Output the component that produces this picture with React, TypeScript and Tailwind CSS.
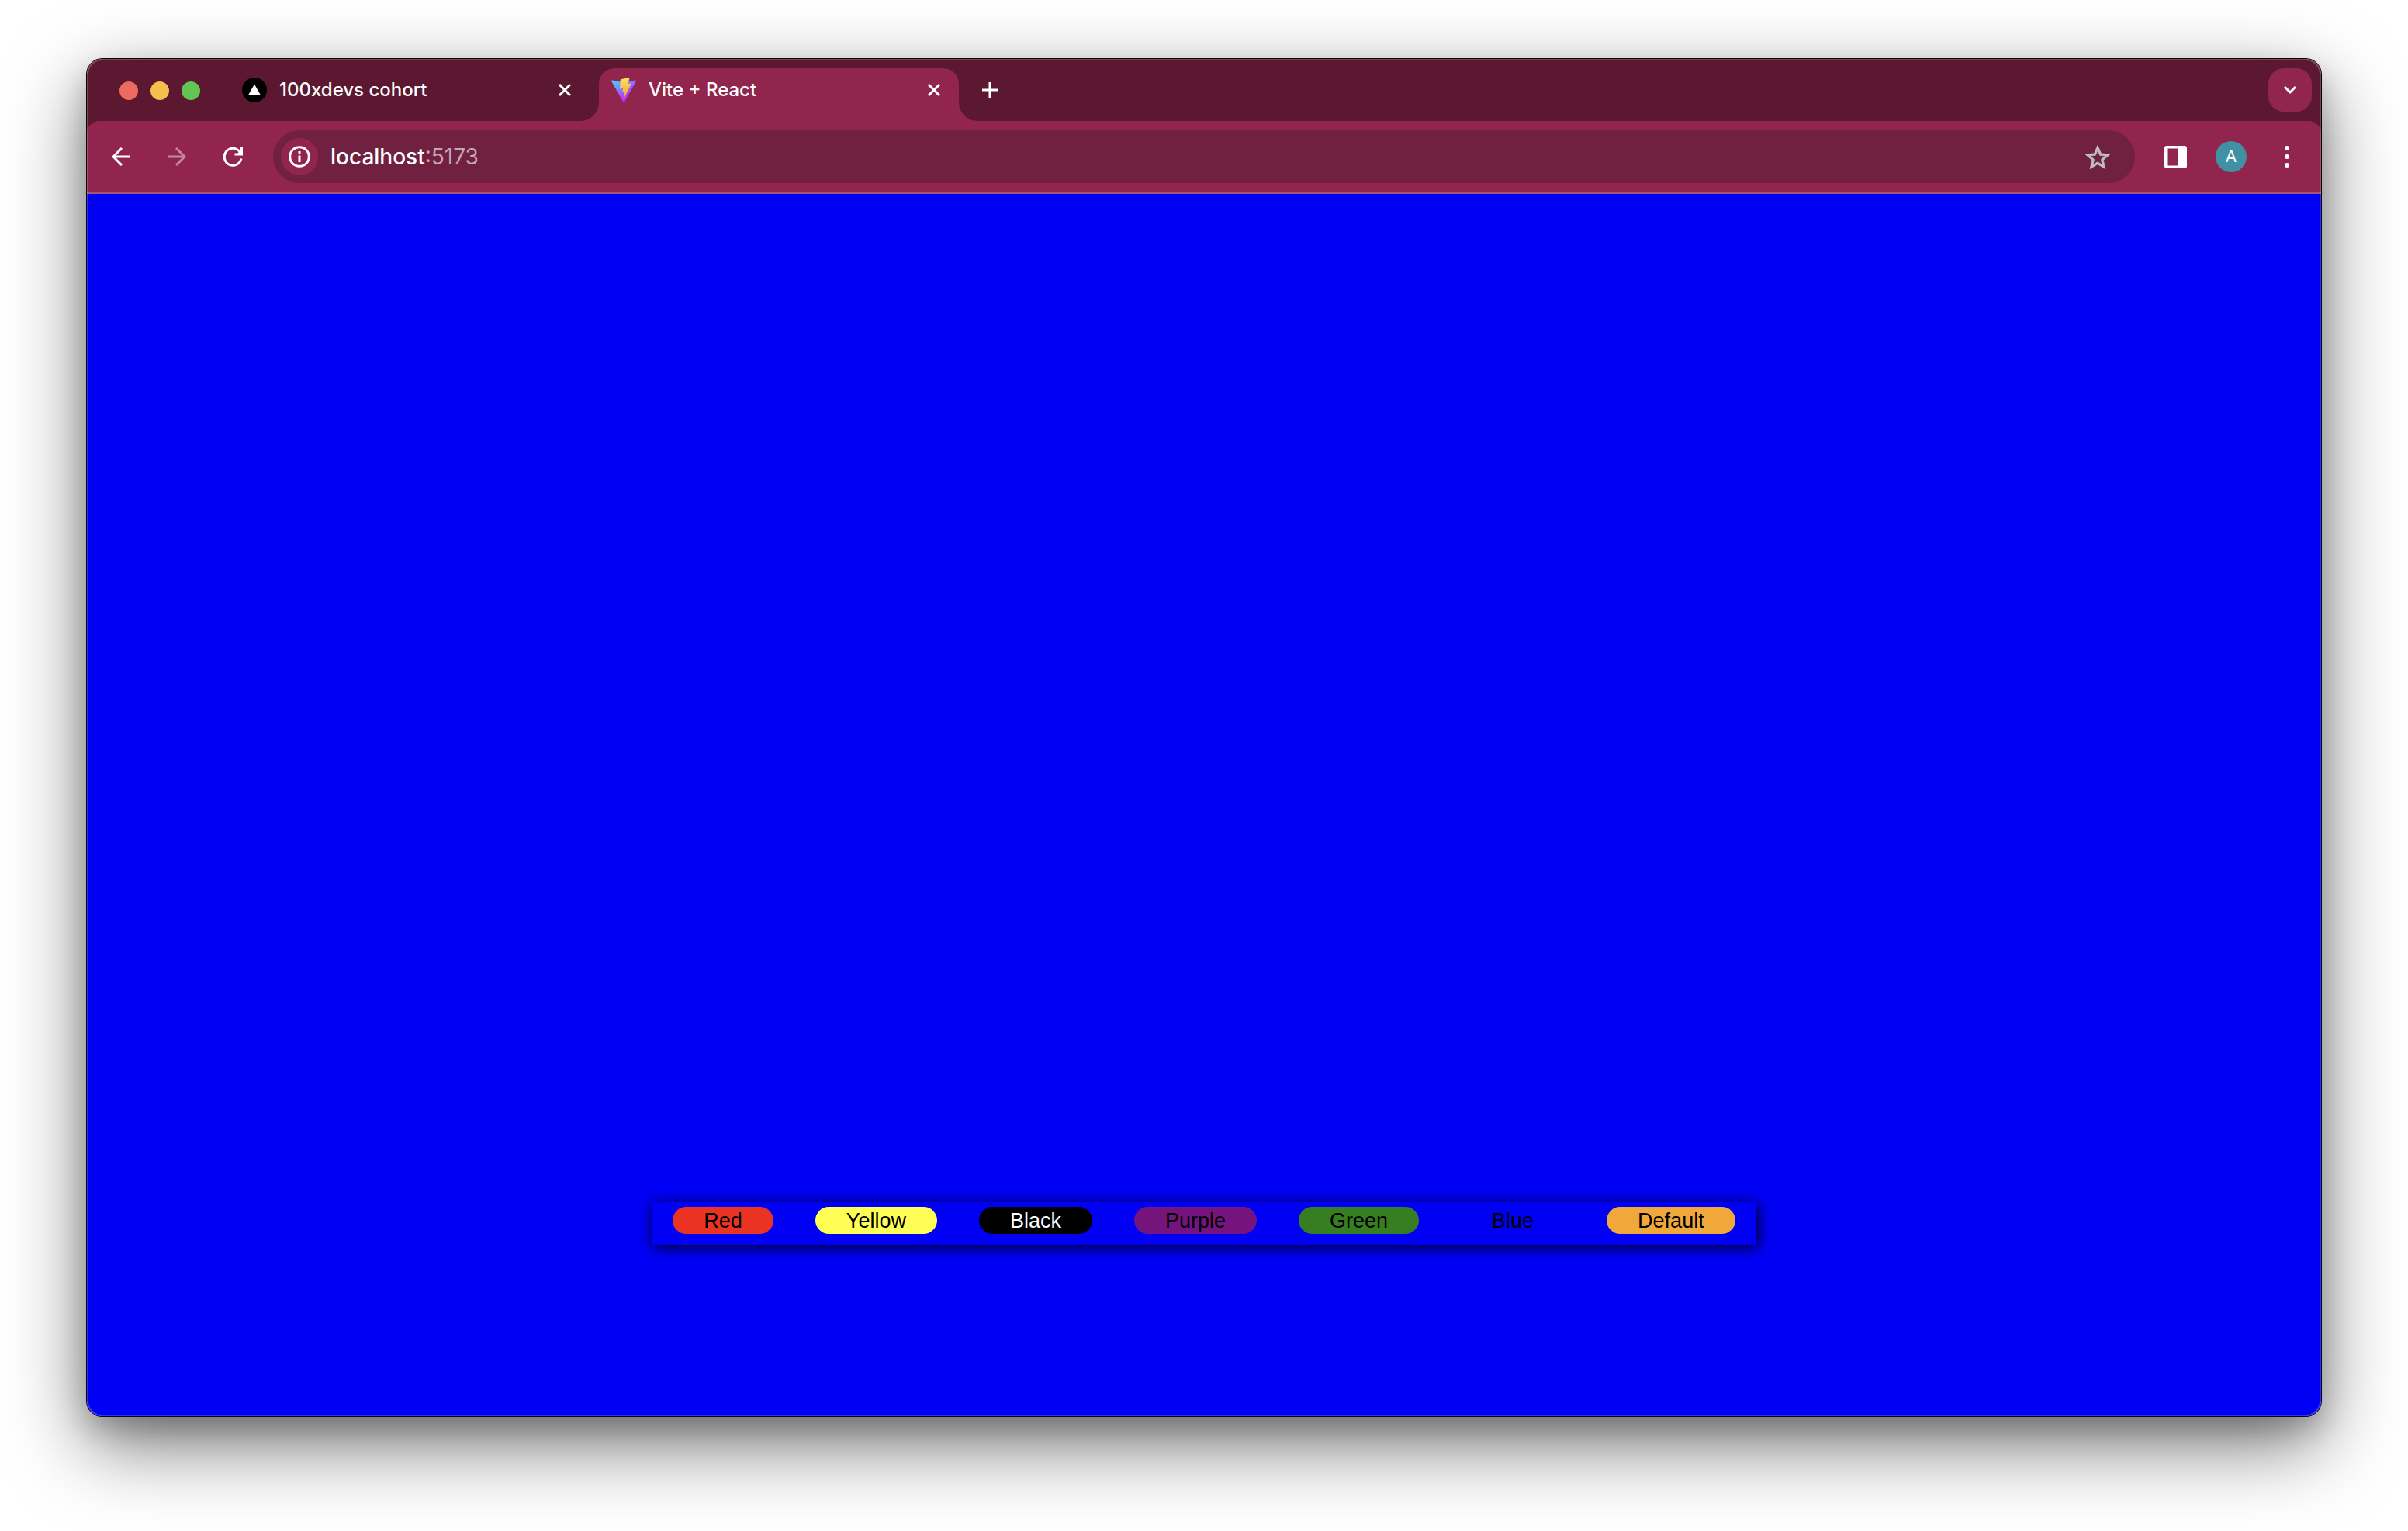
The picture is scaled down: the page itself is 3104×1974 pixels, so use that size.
import React from "react";

function CloseIcon() {
  return (
    <svg width="18" height="18" viewBox="0 0 18 18" fill="none" stroke="#fff" strokeWidth="3">
      <path d="M2 2L16 16M16 2L2 16" />
    </svg>
  );
}

function VercelIcon() {
  return (
    <svg width="32" height="32" viewBox="0 0 32 32" className="shrink-0">
      <circle cx="16" cy="16" r="16" fill="#000" />
      <path d="M16 8.5L23.6 22H8.4Z" fill="#fff" />
    </svg>
  );
}

function ViteIcon() {
  return (
    <svg width="32" height="32" viewBox="0 0 256 257" className="shrink-0">
      <defs>
        <linearGradient id="vite-v" x1="-.828%" x2="57.636%" y1="7.652%" y2="78.411%">
          <stop offset="0%" stopColor="#41D1FF" />
          <stop offset="100%" stopColor="#BD34FE" />
        </linearGradient>
        <linearGradient id="vite-bolt" x1="43.376%" x2="50.316%" y1="2.242%" y2="89.03%">
          <stop offset="0%" stopColor="#FBE35C" />
          <stop offset="100%" stopColor="#F2A93B" />
        </linearGradient>
      </defs>
      <path
        fill="url(#vite-v)"
        d="M255.153 37.938L134.897 252.976c-2.483 4.44-8.862 4.466-11.382.048L.875 37.958c-2.746-4.814 1.371-10.646 6.827-9.67l120.385 21.517a6.537 6.537 0 0 0 2.322-.004l117.867-21.483c5.438-.991 9.574 4.796 6.877 9.62Z"
      />
      <path
        fill="url(#vite-bolt)"
        d="M185.432.063L96.44 17.501a3.268 3.268 0 0 0-2.634 3.014l-5.474 92.456a3.268 3.268 0 0 0 3.997 3.378l24.777-5.718c2.318-.535 4.413 1.507 3.936 3.838l-7.361 36.047c-.495 2.426 1.782 4.5 4.151 3.78l15.304-4.649c2.372-.72 4.652 1.36 4.15 3.788l-11.698 56.621c-.732 3.542 3.979 5.473 5.943 2.437l1.313-2.028l72.516-144.72c1.215-2.423-.88-5.186-3.54-4.672l-25.505 4.922c-2.396.462-4.435-1.77-3.759-4.114l16.646-57.705c.677-2.35-1.37-4.583-3.769-4.113Z"
      />
    </svg>
  );
}

function TabStrip() {
  return (
    <div className="flex h-20 bg-[#5c1831] pr-3 pl-[42px]">
      <div className="flex w-[158px] items-center gap-4 pt-0.5">
        <button aria-label="Close window" className="size-6 rounded-full bg-[#ed6a5e]" />
        <button aria-label="Minimize window" className="size-6 rounded-full bg-[#f5bf4f]" />
        <button aria-label="Zoom window" className="size-6 rounded-full bg-[#61c554]" />
      </div>
      <div className="flex w-[460px] items-center gap-4 pr-[35px]">
        <VercelIcon />
        <span className="grow font-medium">100xdevs cohort</span>
        <button aria-label="Close tab 100xdevs cohort">
          <CloseIcon />
        </button>
      </div>
      <div className="relative mt-3 flex w-[464px] items-center gap-4 rounded-t-[20px] bg-[#92254d] pr-[23px] pb-3 pl-4">
        <svg className="absolute bottom-0 -left-6" width="24" height="24" viewBox="0 0 24 24">
          <path d="M24 0A24 24 0 0 1 0 24H24Z" fill="#92254d" />
        </svg>
        <svg className="absolute -right-6 bottom-0" width="24" height="24" viewBox="0 0 24 24">
          <path d="M0 0A24 24 0 0 0 24 24H0Z" fill="#92254d" />
        </svg>
        <ViteIcon />
        <span className="grow font-medium">Vite + React</span>
        <button aria-label="Close tab Vite + React">
          <CloseIcon />
        </button>
      </div>
      <button aria-label="New tab" className="ml-[30px]">
        <svg width="20" height="20" viewBox="0 0 20 20" stroke="#fff" strokeWidth="3">
          <path d="M10 0V20M0 10H20" />
        </svg>
      </button>
      <button
        aria-label="Search tabs"
        className="mt-3 ml-auto flex size-14 items-center justify-center rounded-[20px] bg-[#92254d]"
      >
        <svg width="18" height="12" viewBox="0 0 18 12" fill="none" stroke="#fff" strokeWidth="3">
          <path d="M2 2L9 9L16 2" />
        </svg>
      </button>
    </div>
  );
}

function Toolbar() {
  return (
    <div className="bg-[#5c1831]">
      <div className="flex h-[94px] items-center rounded-t-2xl border-b-2 border-[#a9507a] bg-[#92254d] pr-[41px] pl-8">
        <button aria-label="Back">
          <svg width="24" height="24" viewBox="0 0 24 24" fill="none" stroke="#fff" strokeWidth="3">
            <path d="M24 12H2M13 1L2 12L13 23" />
          </svg>
        </button>
        <button aria-label="Forward" className="ml-12 opacity-45">
          <svg width="24" height="24" viewBox="0 0 24 24" fill="none" stroke="#fff" strokeWidth="3">
            <path d="M0 12H22M11 1L22 12L11 23" />
          </svg>
        </button>
        <button aria-label="Reload" className="ml-12">
          <svg width="25" height="25" viewBox="0 0 25 25" fill="none" stroke="#fff" strokeWidth="3">
            <path d="M23 14.5A11 11 0 1 1 20.5 5L23 8" />
            <path d="M23.5 0V9H14.5" />
            <path d="M23 3V8H18Z" fill="#fff" stroke="none" />
          </svg>
        </button>
        <div className="mr-[38px] ml-[39px] flex h-[68px] grow items-center rounded-full bg-[#712140] pr-8 pl-2.5">
          <button
            aria-label="View site information"
            className="flex size-12 items-center justify-center rounded-full bg-[#92254d]"
          >
            <svg width="28" height="28" viewBox="0 0 28 28" fill="none" stroke="#fff" strokeWidth="3">
              <circle cx="14" cy="14" r="12.3" />
              <path d="M14 12.5V21M14 7V10" />
            </svg>
          </button>
          <a href="#" className="ml-4 text-[28px] leading-9 text-white">
            <span className="font-medium">localhost</span>
            <span className="text-[#c6a6b3]">:5173</span>
          </a>
          <button aria-label="Bookmark this tab" className="ml-auto">
            <svg width="32" height="31" viewBox="2 2 20 19" fill="#c0bcbe" stroke="#c0bcbe" strokeWidth="0.5">
              <path d="M22 9.24l-7.19-.62L12 2 9.19 8.63 2 9.24l5.46 4.73L5.82 21 12 17.27 18.18 21l-1.63-7.03L22 9.24zM12 15.4l-3.76 2.27 1-4.28-3.32-2.88 4.38-.38L12 6.1l1.71 4.04 4.38.38-3.32 2.88 1 4.28L12 15.4z" />
            </svg>
          </button>
        </div>
        <button aria-label="Side panel">
          <svg width="29" height="29" viewBox="0 0 29 29">
            <path
              fill="#fff"
              fillRule="evenodd"
              d="M3 0H26A3 3 0 0 1 29 3V26A3 3 0 0 1 26 29H3A3 3 0 0 1 0 26V3A3 3 0 0 1 3 0ZM3.5 3.5V25.5H17V3.5Z"
            />
          </svg>
        </button>
        <button
          aria-label="Profile"
          className="ml-[37px] flex size-10 items-center justify-center rounded-full bg-[#4091a3] font-[Roboto] text-[22px] leading-none text-white"
        >
          A
        </button>
        <button aria-label="Menu" className="ml-[49px]">
          <svg width="6" height="28" viewBox="0 0 6 28" fill="#fff">
            <circle cx="3" cy="3" r="3" />
            <circle cx="3" cy="14" r="3" />
            <circle cx="3" cy="25" r="3" />
          </svg>
        </button>
      </div>
    </div>
  );
}

const colors = [
  { name: "Red", className: "bg-[#ea3323] text-black" },
  { name: "Yellow", className: "bg-[#fffe54] text-black" },
  { name: "Black", className: "bg-black text-white" },
  { name: "Purple", className: "bg-[#75147c] text-black" },
  { name: "Green", className: "bg-[#377e22] text-black" },
  { name: "Blue", className: "bg-[#0000f5] text-black" },
  { name: "Default", className: "bg-[#f0a83b] text-black" },
];

export default function App() {
  return (
    <div className="flex min-h-screen flex-col bg-white px-28 pt-[76px] pb-[148px]">
      <div className="relative flex grow flex-col overflow-hidden rounded-[20px] font-[Inter,sans-serif] text-2xl text-white shadow-[0_0_0_1px_#000,0_16px_36px_rgba(0,0,0,0.2),0_36px_100px_rgba(0,0,0,0.55)]">
        <TabStrip />
        <Toolbar />
        <main className="flex grow flex-col items-center justify-end bg-[#0000f5] pb-[221px]">
          <div className="flex gap-[54px] px-[27px] pt-1.5 pb-3.5 shadow-[2px_3px_16px_rgba(0,0,0,0.9)]">
            {colors.map((c) => (
              <button
                key={c.name}
                className={`h-[35px] rounded-full px-10 font-['Liberation_Sans',Arial,sans-serif] text-[27px] leading-[34px] ${c.className}`}
              >
                {c.name}
              </button>
            ))}
          </div>
        </main>
        <div className="pointer-events-none absolute inset-0 rounded-[20px] border-2 border-white/20" />
      </div>
    </div>
  );
}
